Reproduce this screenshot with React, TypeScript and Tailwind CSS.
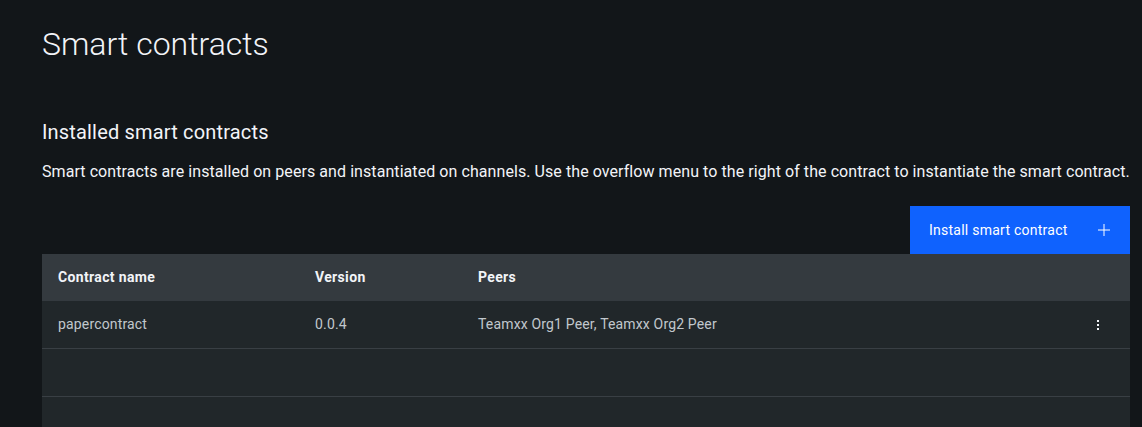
import React from "react";

const font = { fontFamily: "Roboto, 'Noto Sans', sans-serif" };

export default function App() {
  return (
    <div className="min-h-[427px] w-full bg-[#121619] text-[#f2f4f8] overflow-hidden" style={font}>
      <div className="pl-[42px] pr-[12px] pt-[24px]">
        <h1 className="text-[32px] leading-[40px] font-light tracking-[0px]">Smart contracts</h1>
        <h2 className="mt-[54px] text-[20px] leading-[28px] font-normal tracking-[0.17px]">Installed smart contracts</h2>
        <p className="mt-[14px] text-[16px] leading-[24px] text-[#f2f4f8] tracking-[0.07px]">
          Smart contracts are installed on peers and instantiated on channels. Use the overflow menu to the right of the contract to instantiate the smart contract.
        </p>
        <div className="mt-[22px] flex justify-end">
          <button className="h-[48px] w-[220px] bg-[#0f62fe] flex items-center justify-between pl-[19px] pr-[18px] text-[14px] text-[#ffffff] tracking-[0.25px]">
            <span>Install smart contract</span>
            <svg width="16" height="16" viewBox="0 0 16 16" fill="none">
              <path d="M8 2v12M2 8h12" stroke="#ffffff" strokeWidth="1" />
            </svg>
          </button>
        </div>
        <div className="w-full text-[14px] tracking-[0.16px]">
          <div className="grid grid-cols-[257px_163px_1fr_64px] h-[47px] bg-[#343a3f] items-center font-bold text-[#f2f4f8] tracking-[0.35px]">
            <div className="pl-[16px]">Contract name</div>
            <div className="pl-[16px]">Version</div>
            <div className="pl-[16px]">Peers</div>
            <div></div>
          </div>
          <div className="grid grid-cols-[257px_163px_1fr_64px] h-[48px] bg-[#21272a] items-center text-[#c1c7cd] border-b border-[#393f44]">
            <div className="pl-[16px]">papercontract</div>
            <div className="pl-[16px]">0.0.4</div>
            <div className="pl-[16px]">Teamxx Org1 Peer, Teamxx Org2 Peer</div>
            <div className="flex justify-start pl-[24px]">
              <svg width="16" height="16" viewBox="0 0 16 16" fill="#f2f4f8">
                <rect x="7" y="3" width="2" height="2" />
                <rect x="7" y="7" width="2" height="2" />
                <rect x="7" y="11" width="2" height="2" />
              </svg>
            </div>
          </div>
          <div className="h-[48px] bg-[#21272a] border-b border-[#393f44]"></div>
          <div className="h-[48px] bg-[#21272a]"></div>
        </div>
      </div>
    </div>
  );
}
